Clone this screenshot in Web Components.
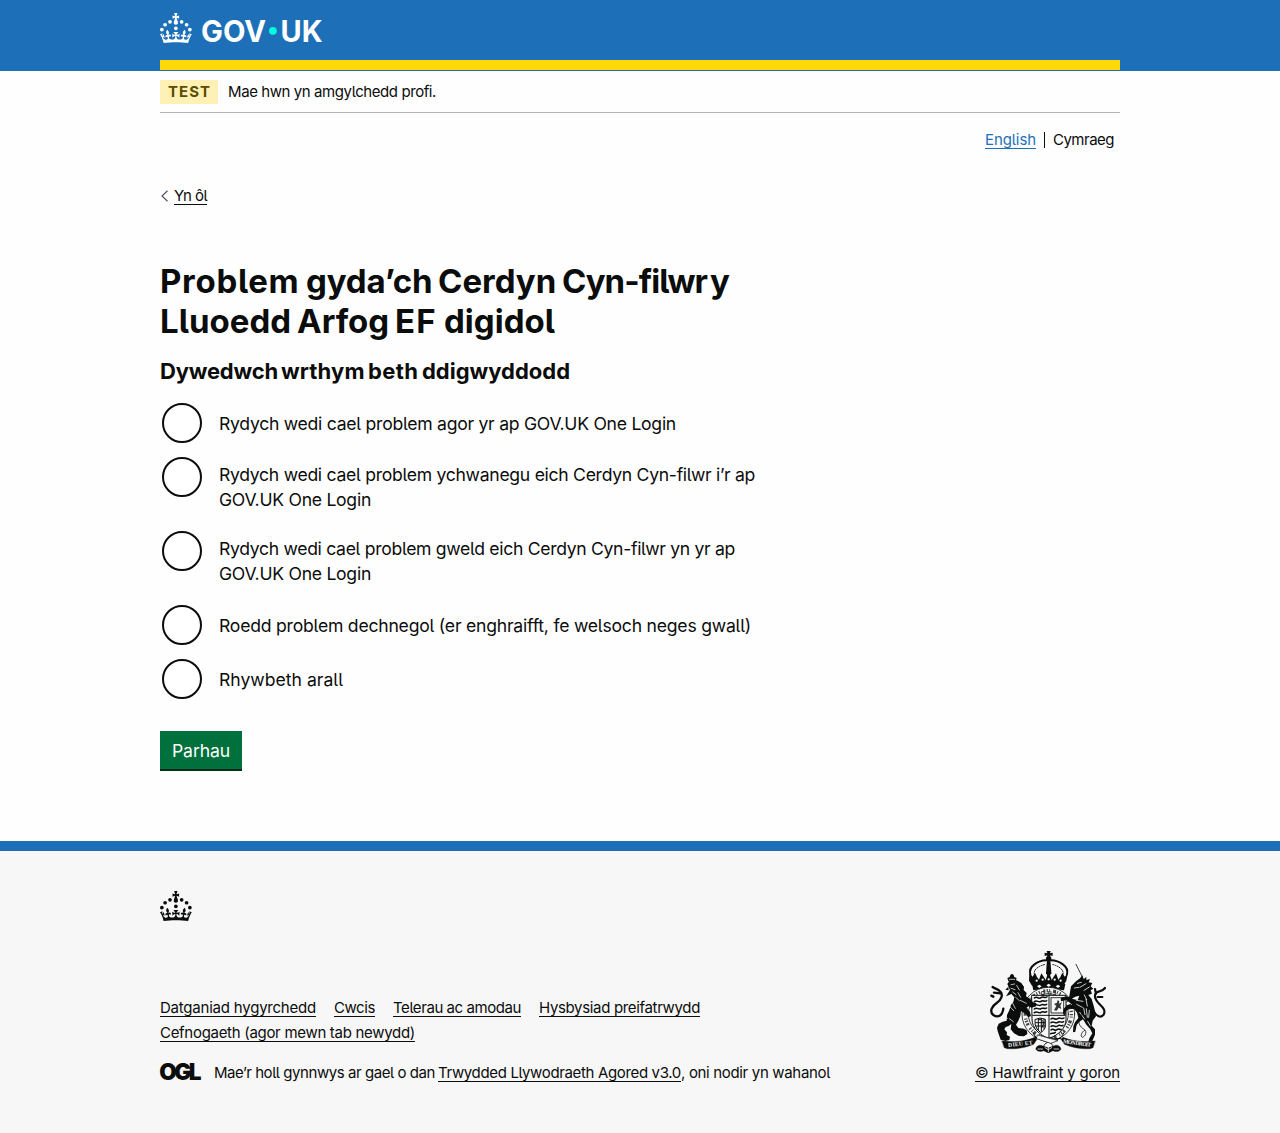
<!DOCTYPE html>
<html lang="cy">
<head>
<meta charset="utf-8">
<title>Problem gyda’ch Cerdyn Cyn-filwr y Lluoedd Arfog EF digidol</title>
<style>
html{background:#f7f7f7}
body{margin:0;background:#fefefe;color:#0b0c0c;font-family:Inter,"Liberation Sans",sans-serif;font-size:15px;line-height:20px;font-feature-settings:"cv05" 1}
main{width:960px;height:770px;margin:0 auto;display:flex;flex-direction:column;align-items:flex-start}
h1{margin:55px 0 0;font-size:33px;line-height:40px;font-weight:700;word-spacing:-2px}
h2{margin:15px 0 0;font-size:22px;line-height:30px;font-weight:700;word-spacing:-2px}
.line{display:flex}
.tight{word-spacing:-4px}
</style>
</head>
<body>
<gov-header></gov-header>
<main>
  <phase-banner label="TEST"><fit-run w="208">Mae hwn yn amgylchedd profi.</fit-run></phase-banner>
  <language-switch></language-switch>
  <back-link><fit-run w="33">Yn ôl</fit-run></back-link>
  <h1><span class="line"><fit-run w="146">Problem </fit-run><fit-run w="132">gyda’ch </fit-run><fit-run w="124">Cerdyn </fit-run><fit-run w="148" class="tight">Cyn-filwr </fit-run><fit-run w="18">y</fit-run></span><span class="line"><fit-run w="137">Lluoedd </fit-run><fit-run w="98">Arfog </fit-run><fit-run w="49">EF </fit-run><fit-run w="111">digidol</fit-run></span></h1>
  <h2 class="line"><fit-run w="121">Dywedwch </fit-run><fit-run w="87">wrthym </fit-run><fit-run w="54">beth </fit-run><fit-run w="148">ddigwyddodd</fit-run></h2>
  <radio-group>
    <radio-option><fit-run w="457">Rydych wedi cael problem agor yr ap GOV.UK One Login</fit-run></radio-option>
    <radio-option tall><fit-run w="536">Rydych wedi cael problem ychwanegu eich Cerdyn Cyn-filwr i’r ap</fit-run><fit-run w="152">GOV.UK One Login</fit-run></radio-option>
    <radio-option tall><fit-run w="516">Rydych wedi cael problem gweld eich Cerdyn Cyn-filwr yn yr ap</fit-run><fit-run w="152">GOV.UK One Login</fit-run></radio-option>
    <radio-option><fit-run w="532">Roedd problem dechnegol (er enghraifft, fe welsoch neges gwall)</fit-run></radio-option>
    <radio-option><fit-run w="124">Rhywbeth arall</fit-run></radio-option>
  </radio-group>
  <gov-button><fit-run w="58">Parhau</fit-run></gov-button>
</main>
<gov-footer></gov-footer>

<script>
const define = (name, html) => customElements.define(name, class extends HTMLElement {
  constructor() {
    super();
    this.attachShadow({ mode: 'open' }).innerHTML = html;
    this.shadowRoot.querySelectorAll('[data-attr]').forEach(n => n.textContent = this.getAttribute(n.dataset.attr));
  }
});

define('crown-mark', `<style>:host{display:block;width:32px;height:30px}svg{display:block}</style>
<svg width="32" height="30" viewBox="0 0 64 60" fill="currentColor"><circle cx="20" cy="17.6" r="3.7"/><circle cx="10.2" cy="23.5" r="3.7"/><circle cx="3.7" cy="33.2" r="3.7"/><circle cx="31.7" cy="30.6" r="3.7"/><circle cx="43.3" cy="17.6" r="3.7"/><circle cx="53.2" cy="23.5" r="3.7"/><circle cx="59.7" cy="33.2" r="3.7"/><path d="M33.1,9.8c.2-.1.3-.3.5-.5l4.6,2.4v-6.8l-4.6,1.5c-.1-.2-.3-.3-.5-.5l1.9-5.9h-6.7l1.9,5.9c-.2.1-.3.3-.5.5l-4.6-1.5v6.8l4.6-2.4c.1.2.3.3.5.5l-2.6,8c-.9,2.8,1.2,5.7,4.1,5.7h0c3,0,5.1-2.9,4.1-5.7l-2.6-8ZM37,37.9s-3.4,3.8-4.1,6.1c2.2,0,4.2-.5,6.4-2.8l-.7,8.5c-2-2.8-4.4-4.1-5.7-3.8.1,3.1.5,6.7,5.8,7.2,3.7.3,6.7-1.5,7-3.8.4-2.6-2-4.3-3.7-1.6-1.4-4.5,2.4-6.1,4.9-3.2-1.9-4.5-1.8-7.7,2.4-10.9,3,4,2.6,7.3-1.2,11.1,2.4-1.3,6.2,0,4,4.6-1.2-2.8-3.7-2.2-4.2.2-.3,1.7.7,3.7,3,4.2,1.9.3,4.7-.9,7-5.9-1.3,0-2.4.7-3.9,1.7l2.4-8c.6,2.3,1.4,3.7,2.2,4.5.6-1.6.5-2.8,0-5.3l5,1.8c-2.6,3.6-5.2,8.7-7.3,17.5-7.4-1.1-15.7-1.7-24.5-1.7h0c-8.8,0-17.1.6-24.5,1.7-2.1-8.9-4.7-13.9-7.3-17.5l5-1.8c-.5,2.5-.6,3.7,0,5.3.8-.8,1.6-2.3,2.2-4.5l2.4,8c-1.5-1-2.6-1.7-3.9-1.7,2.3,5,5.2,6.2,7,5.9,2.3-.4,3.3-2.4,3-4.2-.5-2.4-3-3.1-4.2-.2-2.2-4.6,1.6-6,4-4.6-3.7-3.7-4.2-7.1-1.2-11.1,4.2,3.2,4.3,6.4,2.4,10.9,2.5-2.8,6.3-1.3,4.9,3.2-1.8-2.7-4.1-1-3.7,1.6.3,2.3,3.3,4.1,7,3.8,5.4-.5,5.7-4.2,5.8-7.2-1.3-.2-3.7,1-5.7,3.8l-.7-8.5c2.2,2.3,4.2,2.7,6.4,2.8-.7-2.3-4.1-6.1-4.1-6.1h10.6,0Z"/></svg>`);

define('gov-header', `<style>
:host{display:block;height:71px;background:#1d70b8;color:#fff}
.in{width:960px;margin:0 auto;display:flex;flex-direction:column}
.logo{display:flex;gap:7px;padding-top:13px;height:60px;box-sizing:border-box}
.bar{height:10px;background:#ffd80a}
svg{display:block}
</style><div class="in"><div class="logo"><crown-mark></crown-mark>
<svg width="130" height="46" viewBox="-2 0 130 46" fill="#fff" font-family="Inter,sans-serif" font-weight="700" font-size="30"><text x="0" y="29" textLength="65" lengthAdjust="spacingAndGlyphs">GOV</text><circle cx="71.9" cy="17.8" r="3.9" fill="#00ffe0"/><text x="79.5" y="29" textLength="42" lengthAdjust="spacingAndGlyphs">UK</text></svg>
</div><div class="bar"></div></div>`);

define('phase-banner', `<style>
:host{display:flex;align-items:center;width:960px;height:42px;box-sizing:border-box;border-bottom:1px solid #b1b4b6;gap:10px}
.tag{display:flex;align-items:center;height:24px;width:58px;box-sizing:border-box;padding-left:8px;background:#fff1b5;color:#594d00;font-weight:700;margin-top:1px}
</style><span class="tag"><fit-run w="43" data-attr="label"></fit-run></span><slot></slot>`);

define('language-switch', `<style>
:host{display:flex;align-self:flex-end;align-items:center;height:20px;margin:17px 6px 0 0}
a{color:#1d70b8;text-decoration:underline 1px;text-underline-offset:3px;text-decoration-skip-ink:none}
i{width:1px;height:16px;background:#0b0c0c;margin:0 8px}
</style><a><fit-run w="51">English</fit-run></a><i></i><fit-run w="61">Cymraeg</fit-run>`);

define('back-link', `<style>
:host{display:flex;align-items:center;height:20px;margin-top:36px;gap:5px}
a{text-decoration:underline 1px;text-underline-offset:3px;text-decoration-skip-ink:none;display:block}
svg{display:block}
</style><svg width="9" height="12" viewBox="0 0 9 12" fill="none" stroke="#505a5f" stroke-width="1.2"><path d="M7.5 .8 2 6l5.5 5.2"/></svg><a><slot></slot></a>`);

define('radio-group', `<style>:host{display:flex;flex-direction:column;gap:10px;margin-top:15px}</style><slot></slot>`);

define('radio-option', `<style>
:host{display:flex;height:44px;gap:15px;font-size:17.6px;line-height:25px}
:host([tall]){height:64px}
.dot{width:40px;height:40px;box-sizing:border-box;border:2px solid #0b0c0c;border-radius:50%;margin:2px 0 0 2px;background:#fff;flex:none}
.label{display:flex;flex-direction:column;align-items:flex-start;padding:10px 0 0 2px}
:host([tall]) .label{padding-top:7px}
</style><span class="dot"></span><span class="label"><slot></slot></span>`);

define('gov-button', `<style>
:host{display:flex;justify-content:center;width:82px;height:38px;line-height:39px;margin-top:30px;background:#00703c;box-shadow:0 2px 0 #002d18;color:#fff;font-size:17.6px}
</style><slot></slot>`);

/* Royal coat of arms: crown, shield with garter, lion, unicorn, motto ribbon */
define('royal-arms', `<style>:host{display:block}svg{display:block}</style>
<svg width="116" height="102" viewBox="60 33 348 306" fill="none" stroke="#0b0c0c" stroke-width="3" stroke-linecap="round" stroke-linejoin="round">
<g fill="#0b0c0c" stroke="none">
<circle cx="236" cy="56" r="8"/><path d="M230 33h12l-2 7 8-2v10l-8-2 3 12h-14l3-12-8 2v-10l8 2z"/>
<path d="M231 58h10l3 42-8 12-8-12z"/>
<path d="M186 132q50-13 100 0l-4 19q-46-10-92 0z"/>
<path d="M178 98l10 12 7-12 6 13 6 8 7-19 8 12 5 8 9-28 9 28 5-8 8-12 7 19 6-8 6-13 7 12 10-12-5 24-9 15q-47-14-94 0l-9-15z"/>
</g>
<path d="M181 103C174 78 205 62 229 61M291 103C298 78 267 62 243 61" stroke-width="6"/>
<path d="M193 102C190 88 209 76 227 73M279 102C282 88 263 76 245 73" stroke-width="3" stroke-dasharray="3 4"/>
<g fill="#f7f7f7" stroke="none"><circle cx="200" cy="122" r="3.4"/><circle cx="218" cy="119" r="3.4"/><circle cx="236" cy="118" r="3.4"/><circle cx="254" cy="119" r="3.4"/><circle cx="272" cy="122" r="3.4"/><path d="M201 139l7-5 7 5-7 5zM229 136l7-5 7 5-7 5zM257 139l7-5 7 5-7 5z"/></g>
<ellipse cx="235" cy="222" rx="79" ry="80" fill="#f7f7f7" stroke-width="2.4"/>
<ellipse cx="235" cy="222" rx="69" ry="70" stroke="#444" stroke-width="10" stroke-linecap="butt" stroke-dasharray="4 4 3 9 8 4 3 5 4 10 6 4"/>
<ellipse cx="235" cy="222" rx="60" ry="61" fill="#f7f7f7" stroke-width="2.4"/>
<path d="M186 166h102v72c0 27-24 48-51 57-28-9-51-30-51-57z" fill="#f7f7f7" stroke-width="3"/>
<path d="M237 168v124M188 226h98" stroke-width="3"/>
<g stroke-width="4.5"><path d="M193 174c8-7 13 5 20-1s11 4 18-3M193 185c8-7 13 5 20-1s11 4 17-2M193 196c8-7 13 5 20-1s11 4 17-2M193 207c8-7 13 4 20-1s11 3 17-2M193 218c8-7 13 4 20-1s11 3 17-2"/>
<path d="M243 237c8-7 12 5 20-1s12 4 19-2M243 248c8-7 12 5 20-1s9 3 18-2M243 259c8-7 12 5 20-1s9 3 16-2M243 270c8-7 11 5 18-1s7 2 12-1M242 281c5-4 9 2 14-4"/></g>
<path d="M243 173h38v46h-38z" stroke-width="2.5" stroke-dasharray="4 2"/>
<path d="M252 211l7-13-7-6 9-4 2-8 5 4-1 7 9-4-5 10 3 10-8-4-6 9z" fill="#333" stroke="none"/>
<path d="M196 238q14-8 30 0v24q-5 11-14 16-14-11-16-22zM206 239c15-4 18 11 9 26M205 235v34M214 235v39M222 237v28M198 248h26M199 258h24" stroke-width="3"/>
<!-- lion -->
<g fill="#0b0c0c" stroke="none">
<path d="M112 132l6-9 22-2 14 8 8 13-1 8 9 9-2 10 12 8 9 10 10 2-1 10-13 4-10-4-6 5 10 10 4 14-9 4-6-10-10-5-5-4-2 15-6 14-7 12 7 10 17 2 9 6 1 10-10 7-15-1-15-8-10-12 2-16-8 6-9 3-4 7 8 9-1 8 10 5-2 10-12 3-14-4-5-14-4-12-2-10 5-12 12-6 12-3 1-17 7-14 5-17 7-8 3-14-7-8z"/>
<path d="M115 124l-3-10 7-3 2-6 5-4 5 4 2 6 7 3-3 10z"/>
<path d="M116 151l-10-2 9-9zM108 169l18-8-4-14zM148 139l14 3-5-8z"/>
</g>
<g stroke="#f7f7f7" stroke-width="2.2"><path d="M118 118h16M123 134l11-2M123 145l12 4M140 136l8 14M128 156l10 8M144 158l8 14M137 172l11 10M117 197l14 15M128 190l8 15M100 229l12 6M151 181l18 9M118 236l12 9"/></g>
<path d="M100 206C97 228 84 234 70 225C56 214 68 197 80 189C94 180 100 164 91 155C84 147 74 146 68 141M72 158L91 160M70 170L64 167" stroke-width="7"/>
<!-- unicorn -->
<path d="M318 73l21 42" stroke-width="2.4"/>
<g fill="#0b0c0c" stroke="none">
<path d="M303 139l15-15 12-9 7-9 4 12 8-8 0 10 11-3-4 10 11 2-5 10 8 7-8 5 4 10-11 4 10 12 6 20 3 12 4 20-10 13-3 15 10 11 0 16-8 19-12 3 3-11 9-15-7-14-11-12-10-16-11 7-8 10-4 20-7 2 1-18 5-12 10-13-4-16-9-11-13-1-11 7-2 13-7-3 2-17 11-11 15-1-18-14-16 4-1-11 18-4 21 9 12 2 5-13-12 3-12 7-7-3z"/>
</g>
<g stroke="#f7f7f7" stroke-width="2.4"><path d="M322 130l12-3M330 142l18-11M342 151l16-10M319 181l20 3M320 193l17 9M343 165l7 14M348 178l4 20M341 204l4 20M349 206l3 26M358 211l-2 21M329 217l15 20M353 244l8 14M313 144l14-2"/></g>
<path d="M371 214C379 229 393 235 401 224C408 210 398 202 388 192C378 182 371 171 377 160C384 151 394 158 405 144M378 162L375 147M383 171L397 171" stroke-width="6.5"/>
<path d="M337 222c-18 18-10 37 4 45 13 8 4 23-4 25-8-4 0-18 7-21" stroke-width="2.4" stroke-dasharray="4 2"/>
<!-- ribbon -->
<path d="M96 303l17 1c30 2 58-2 82-12l6 6-10 15c-26 11-53 15-79 13l-9-3zM375 303l-14 1c-30 2-58-2-82-12l-6 6 10 15c26 11 53 15 77 13l9-3z" fill="#0b0c0c" stroke-width="1"/>
<g stroke="none" fill="#f7f7f7" font-family="Liberation Serif,serif" font-weight="700" font-size="17"><text x="115" y="321" textLength="74" transform="rotate(-6 115 321)">DIEU ET</text><text x="279" y="309" textLength="84" transform="rotate(8 279 309)">MON DROIT</text></g>
<g stroke="none" fill="#0b0c0c" font-family="Liberation Sans,sans-serif" font-weight="700" font-size="16"><text x="212" y="165" textLength="46">QUI</text></g>
<path d="M189 278c7 19 25 23 42 27 18 5 24 17 12 24M282 278c-8 20-27 24-43 27-18 5-24 17-12 24M196 292l77 4" stroke-width="3"/>
<path d="M203 285l61 17-22 8-42-14z" fill="#f7f7f7" stroke-width="2"/>
<path d="M219 318c-10-6-20 0-22 9 7 10 18 8 24 5l14 7 14-7c8 4 19 4 24-5-2-9-12-15-22-9l-16 5z" fill="#0b0c0c" stroke-width="1"/>
<path d="M204 327h14M225 323l10 6 10-6M252 327h14M235 319v16" stroke="#f7f7f7" stroke-width="2.4"/>
</svg>`);

define('gov-footer', `<style>
:host{display:block;height:292px;box-sizing:border-box;border-top:10px solid #1d70b8;background:#f7f7f7;padding-top:40px}
.in{width:960px;margin:0 auto;display:flex;flex-direction:column}
.row{display:flex;justify-content:space-between;margin-top:30px}
a{text-decoration:underline 1px;text-underline-offset:3px;text-decoration-skip-ink:none}
nav{display:flex;flex-direction:column;margin-top:44px;line-height:25px}
.line{display:flex}
.g{gap:18px}
.lic{display:flex;line-height:25px;margin-top:15px}
.lic svg{display:block;margin:-2px 10px -3px -2px}
.arms{display:flex;flex-direction:column;align-items:center;width:145px}
.arms a{line-height:25px;margin-top:7px}
.sp{width:3px}
</style><div class="in"><crown-mark></crown-mark>
<div class="row"><div><nav>
<div class="line g"><a><fit-run w="156">Datganiad hygyrchedd</fit-run></a><a><fit-run w="41">Cwcis</fit-run></a><a><fit-run w="128">Telerau ac amodau</fit-run></a><a><fit-run w="161">Hysbysiad preifatrwydd</fit-run></a></div>
<div class="line"><a><fit-run w="255">Cefnogaeth (agor mewn tab newydd)</fit-run></a></div></nav>
<div class="lic"><svg width="46" height="30" viewBox="-2 -5 46 30" fill="#0b0c0c"><text x="-0.8" y="16.8" font-family="Inter,sans-serif" font-weight="900" font-size="22.5" letter-spacing="-2.4" textLength="40" lengthAdjust="spacingAndGlyphs">OGL</text></svg>
<fit-run w="221">Mae’r holl gynnwys ar gael o dan</fit-run><span class="sp"></span><a><fit-run w="243">Trwydded Llywodraeth Agored v3.0</fit-run></a><fit-run w="149">, oni nodir yn wahanol</fit-run></div></div>
<div class="arms"><royal-arms></royal-arms><a><fit-run w="145">© Hawlfraint y goron</fit-run></a></div>
</div></div>`);

/* One unwrapped run of text, tracked so that it fills exactly w pixels. */
customElements.define('fit-run', class extends HTMLElement {
  constructor() {
    super();
    this.attachShadow({ mode: 'open' }).innerHTML =
      '<style>:host{display:block;white-space:pre;width:max-content;text-decoration:inherit;text-underline-offset:inherit;text-decoration-skip-ink:inherit}</style><slot></slot>';
  }
  connectedCallback() {
    this.style.letterSpacing = '0px';
    const natural = this.getBoundingClientRect().width;
    this.style.letterSpacing = ((this.getAttribute('w') - natural) / this.textContent.length) + 'px';
  }
});
</script>
</body>
</html>
